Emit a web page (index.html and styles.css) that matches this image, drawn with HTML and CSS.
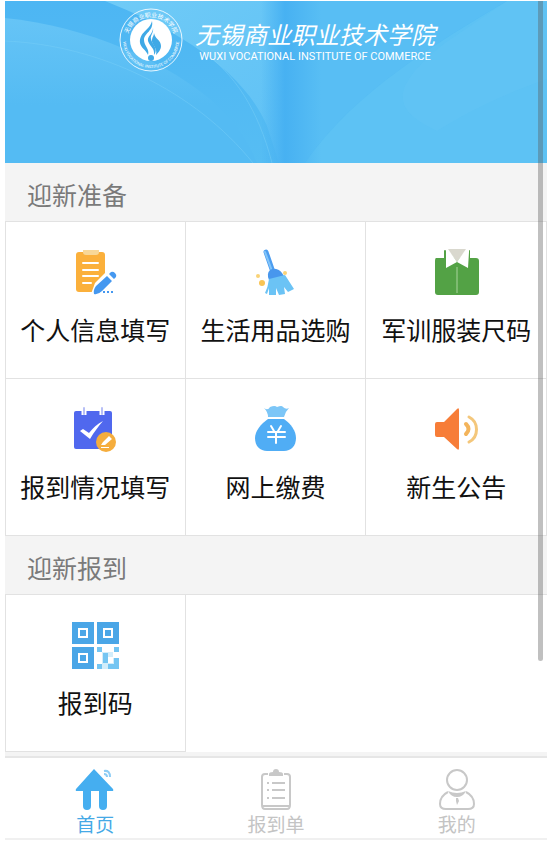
FILE: index.html
```html
<!DOCTYPE html>
<html lang="zh-CN">
<head>
  <meta charset="utf-8">
  <meta name="viewport" content="width=device-width, initial-scale=1">
  <title>迎新系统</title>
  <link rel="stylesheet" href="styles.css">
</head>
<body>

<div class="app">
  <header class="banner">
    <svg class="banner-bg" viewBox="0 0 542 162" preserveAspectRatio="none" aria-hidden="true">
      <defs>
        <linearGradient id="base" x1="0" y1="0" x2="0" y2="1">
          <stop offset="0" stop-color="#4db6f3"/>
          <stop offset="1" stop-color="#56bdf3"/>
        </linearGradient>
        <linearGradient id="fold" x1="0" y1="0" x2="1" y2="0">
          <stop offset="0" stop-color="#47b1f2" stop-opacity="0"/>
          <stop offset=".4" stop-color="#47b1f2"/>
          <stop offset="1" stop-color="#47b1f2" stop-opacity="0"/>
        </linearGradient>
        <linearGradient id="page" x1="0" y1="0" x2="1" y2="1">
          <stop offset="0" stop-color="#70cbf7"/>
          <stop offset="1" stop-color="#5fc1f5"/>
        </linearGradient>
        <linearGradient id="sweep" x1="0" y1="0" x2="0" y2="1">
          <stop offset="0" stop-color="#66c4f6"/>
          <stop offset=".6" stop-color="#54bbf3"/>
        </linearGradient>
      </defs>
      <path fill="url(#base)" d="M0 0h542v162H0z"/>
      <path fill="url(#sweep)" d="M0 17C80 25 165 60 215 107c18 18 30 37 37 55H0z"/>
      <path fill="url(#page)" d="M100 0c70 28 138 68 162 125l12 37h6V0z"/>
      <path fill="#58bef4" d="M280 0h222C430 43 350 90 300 162h-20z"/>
      <path fill="#5dc2f4" d="M300 162C350 90 430 43 502 0h40v162z"/>
      <path fill="#68c7f6" d="M502 0h40v78c-40 14-75 30-110 52C390 110 380 90 440 42z" opacity=".3"/>
      <path fill="url(#fold)" d="M256 0h60v162h-60z"/>
      <path fill="none" stroke="#75cdf8" opacity=".5" d="M195 48c35 25 58 60 72 114M0 40c95 4 190 50 248 122"/>
    </svg>
    <div class="brand">
      <svg class="brand-logo" viewBox="0 0 64 64" role="img" aria-label="校徽">
        <defs>
          <path id="arcTop" d="M9 40A24 24 0 1 1 55 40"/>
          <path id="arcBottom" d="M4 32A28 28 0 0 0 60 32"/>
        </defs>
        <circle cx="32" cy="32" r="31" fill="none" stroke="#e6f6ff" stroke-width="1"/>
        <circle cx="32" cy="32" r="21" fill="#fff"/>
        <text class="logo-cn"><textPath href="#arcTop" startOffset="50%" text-anchor="middle">无锡商业职业技术学院</textPath></text>
        <text class="logo-en"><textPath href="#arcBottom" startOffset="50%" text-anchor="middle">WUXI VOCATIONAL INSTITUTE OF COMMERCE</textPath></text>
        <path fill="#3fa9e6" d="M33 13c-2 9-13 11-12 22 1 5 6 7 8 12 2-6-4-9-4-15 0-7 10-9 8-19z"/>
        <path fill="#3fa9e6" d="M34 20c0 6-6 8-5 13 2 6 7 7 6 14 5-6-2-11-3-16-1-4 3-6 2-11z"/>
        <path fill="#3fa9e6" d="M35 25c1 6 7 7 7 13 0 4-3 7-5 9 2-7-5-11-4-15 0-3 2-4 2-7z"/>
        <circle cx="32" cy="50" r="3" fill="#3fa9e6"/>
      </svg>
      <div class="brand-text">
        <h1 class="brand-cn">无锡商业职业技术学院</h1>
        <p class="brand-en">WUXI VOCATIONAL INSTITUTE OF COMMERCE</p>
      </div>
    </div>
  </header>

  <main>
    <section>
      <h2 class="section-title">迎新准备</h2>
      <div class="grid">
        <a class="cell" href="#info">
          <svg class="icon" viewBox="0 0 48 48" aria-hidden="true">
            <rect x="5" y="4" width="29" height="40" rx="3" fill="#fbb03b"/>
            <path fill="#f8d797" d="M12 2h16v2q0 3-3 3H15q-3 0-3-3z"/>
            <path stroke="#fff" stroke-width="2" stroke-linecap="round" d="M12 15h15M12 22h15M12 28h15M12 35h8"/>
            <path fill="#fff" d="M20 46l4-11 13-13 8 5-13 19z"/>
            <path fill="#4598f0" d="M23 46q-1-4 2-8l11-10 5 5-10 10q-4 4-8 3zM38 26l2-2q2-1 4 1t1 4l-2 2z"/>
            <path stroke="#4598f0" stroke-width="2" d="M32 44h2M36 44h2M40 44h2"/>
          </svg>
          <span class="label">个人信息填写</span>
        </a>
        <a class="cell" href="#goods">
          <svg class="icon" viewBox="0 0 48 48" aria-hidden="true">
            <path stroke="#4c9df0" stroke-width="5" stroke-linecap="round" d="M15 4l7 20"/>
            <path stroke="#82c5f9" stroke-width="2" stroke-linecap="round" d="M14 4l7 19"/>
            <path fill="#4897ed" d="M17 29q-1-6 4-8 6-1 10 4l2 3-15 4z"/>
            <path fill="#6bc3f5" d="M18 31l16-4 9 14-6 3-4-5 1 7-6 1-3-7v7h-7v-7l-2 6-2-1q3-6 4-14z"/>
            <circle cx="7" cy="28" r="2" fill="#f9d377"/>
            <circle cx="11" cy="35" r="3" fill="#f9c454"/>
            <circle cx="34" cy="25" r="2" fill="#f9d377"/>
          </svg>
          <span class="label">生活用品选购</span>
        </a>
        <a class="cell" href="#uniform">
          <svg class="icon" viewBox="0 0 48 48" aria-hidden="true">
            <path fill="#53a245" d="M4 10h8V3q0-1 1-1h24q1 0 1 1v7h6q3 0 3 3v31q0 3-3 3H6q-3 0-3-3V13q0-3 1-3z"/>
            <path fill="#d9d8ce" d="M15 1h20L25 14z"/>
            <path fill="#fff" d="M13 1h3l9 13-11 6V3zM37 1h-3l-9 13 11 6 1-16z"/>
            <path stroke="#a9d49c" stroke-width="1" d="M25 19v26"/>
          </svg>
          <span class="label">军训服装尺码</span>
        </a>
        <a class="cell" href="#status">
          <svg class="icon" viewBox="0 0 48 48" aria-hidden="true">
            <rect x="3" y="6" width="38" height="38" rx="2" fill="#5068ee"/>
            <path stroke="#fff" stroke-width="5" d="M13 2v8M31 2v8"/>
            <path stroke="#b7bff6" stroke-width="2" stroke-linecap="round" d="M13 3v6M31 3v6"/>
            <path fill="#fff" d="M9 26l3-2 6 4c4-5 8-9 14-12-5 6-9 11-13 18z"/>
            <circle cx="35" cy="37" r="10" fill="#f5ad3d"/>
            <path fill="#fff" d="M30 40l2-3 6-6 3 3-7 6zM30 42h8v1h-8z"/>
          </svg>
          <span class="label">报到情况填写</span>
        </a>
        <a class="cell" href="#pay">
          <svg class="icon" viewBox="0 0 48 48" aria-hidden="true">
            <path fill="#7cc6f7" d="M13 3q4 3 6-1 5-2 7 0 5-2 6 0 3 3 6 1-4 4-5 9H17q0-5-4-9z"/>
            <path fill="#50adf5" d="M17 14h16c7 5 12 12 12 19 0 8-5 13-12 13H16C9 46 4 41 4 33c0-7 6-14 13-19z"/>
            <path fill="none" stroke="#fff" stroke-width="2" stroke-linecap="round" d="M20 21l3 5M30 21l-3 5M17 27h17M17 32h17M25 27v11"/>
          </svg>
          <span class="label">网上缴费</span>
        </a>
        <a class="cell" href="#notice">
          <svg class="icon" viewBox="0 0 48 48" aria-hidden="true">
            <path fill="#f77d38" d="M5 17h7L25 4q2-2 2 1v38q0 3-2 1L12 32H5q-2 0-2-2V19q0-2 2-2z"/>
            <path fill="none" stroke="#f3b45b" stroke-width="4" stroke-linecap="round" d="M34 19q5 5 0 10"/>
            <path fill="none" stroke="#f4c77b" stroke-width="3" stroke-linecap="round" d="M37 12c10 5 10 20 0 25"/>
          </svg>
          <span class="label">新生公告</span>
        </a>
      </div>
    </section>

    <section>
      <h2 class="section-title">迎新报到</h2>
      <div class="grid">
        <a class="cell" href="#code">
          <svg class="icon" viewBox="0 0 48 48" aria-hidden="true">
            <path fill="#4aa6e7" d="M1 1h22v22H1zM26 1h22v22H26zM1 26h22v22H1z"/>
            <path fill="none" stroke="#fff" stroke-width="2" d="M8 8h8v8H8zM33 8h8v8h-8zM8 33h8v8H8z"/>
            <path fill="#d2edfa" d="M26 26h22v22H26z"/>
            <path fill="#fff" d="M31 26h12v5H31zM26 31h5v12h-5zM37 36h5v6h-5zM42 31h6v6h-6z"/>
            <path fill="#74c5f2" d="M26 26h5v5h-5zM43 26h5v5h-5zM32 32h5v10h-5zM26 43h5v5h-5zM43 37h5v11H37v-5h6z"/>
          </svg>
          <span class="label">报到码</span>
        </a>
      </div>
    </section>
  </main>

  <nav class="tabbar">
    <a class="tab active" href="#home">
      <svg class="tab-icon" viewBox="0 0 42 42" aria-hidden="true">
        <path fill="#45aef0" d="M20 1l19 20q1 2-1 2h-5v15q0 4-4 4t-4-4V23h-8v15q0 4-4 4t-4-4V23H3q-2 0-1-2z"/>
        <path fill="none" stroke="#8dcdf5" stroke-width="2" d="M30 3q6-1 6 6M30 6q3 0 3 3"/>
      </svg>
      <span>首页</span>
    </a>
    <a class="tab" href="#list">
      <svg class="tab-icon" viewBox="0 0 42 42" aria-hidden="true">
        <path fill="none" stroke="#c8c8c8" stroke-width="2" d="M13 6h-3q-3 0-3 3v28q0 4 3 4h22q3 0 3-4V9q0-3-3-3h-3M7 38h28"/>
        <path fill="#c8c8c8" d="M14 8V6q0-2 4-2 0-3 3-3t3 3q4 0 4 2v2z"/>
        <path stroke="#c8c8c8" stroke-width="2" d="M12 15h2M12 22h2M12 30h2M17 15h13M17 22h13M17 30h13"/>
      </svg>
      <span>报到单</span>
    </a>
    <a class="tab" href="#mine">
      <svg class="tab-icon" viewBox="0 0 42 42" aria-hidden="true">
        <circle cx="21" cy="12" r="10" fill="none" stroke="#c8c8c8" stroke-width="2"/>
        <path fill="none" stroke="#c8c8c8" stroke-width="2" d="M12 24c-6 3-8 8-8 12q0 5 6 5h22q6 0 6-5c0-4-2-9-8-12"/>
        <path fill="#c8c8c8" d="M12 23q9 4 18 0-3 6-9 6t-9-6zM20 30h2l1 3-2 4-1-4z"/>
      </svg>
      <span>我的</span>
    </a>
  </nav>

  <div class="scroll-thumb"></div>
</div>

</body>
</html>
```
FILE: styles.css
```css
* {
  box-sizing: border-box;
}

body {
  margin: 0;
  padding: 1px 2px 0 5px;
  background: #fff;
  color: #111;
  font-family: "Noto Sans CJK SC", sans-serif;
}

h1,
h2,
p {
  margin: 0;
  font-weight: normal;
}

a {
  color: inherit;
  text-decoration: none;
}

.app {
  position: relative;
  background: #f4f4f4;
}

/* banner */
.banner {
  position: relative;
  height: 162px;
  padding-top: 7px;
}

.banner-bg {
  position: absolute;
  inset: 0;
  width: 100%;
  height: 100%;
}

.brand {
  position: relative;
  display: flex;
  justify-content: center;
  gap: 12px;
  padding-left: 2px;
  color: #fff;
}

.brand-logo {
  width: 64px;
  height: 64px;
  overflow: visible;
}

.logo-cn {
  font-size: 6px;
  fill: #fff;
}

.logo-en {
  font-family: Roboto, sans-serif;
  font-size: 4px;
  fill: #fff;
}

.brand-text {
  padding-top: 10px;
  text-align: center;
}

.brand-cn {
  font-size: 24px;
  line-height: 32px;
  font-style: italic;
}

.brand-en {
  font-family: Roboto, sans-serif;
  font-size: 11px;
  line-height: 14px;
}

/* sections */
.section-title {
  padding: 13px 22px 9px;
  font-size: 25px;
  line-height: 36px;
  color: #7a7a7a;
}

.grid {
  display: grid;
  grid-template-columns: repeat(3, 1fr);
  background: #fff;
  border-top: 1px solid #e2e2e2;
}

.cell {
  display: flex;
  flex-direction: column;
  align-items: center;
  gap: 15px;
  height: 157px;
  padding-top: 26px;
  border-right: 1px solid #e2e2e2;
  border-bottom: 1px solid #e2e2e2;
}

.cell:nth-child(3n + 1) {
  border-left: 1px solid #e2e2e2;
}

.icon {
  width: 48px;
  height: 48px;
  fill: none;
}

.label {
  font-size: 25px;
  line-height: 36px;
}

/* bottom tabs */
.tabbar {
  display: flex;
  margin-top: 4px;
  background: #fff;
  border-top: 2px solid #e6e6e6;
  border-bottom: 2px solid #f0f0f0;
}

.tab {
  flex: 1;
  display: flex;
  flex-direction: column;
  align-items: center;
  padding-top: 10px;
  font-size: 19px;
  line-height: 28px;
  color: #c4c4c4;
}

.tab.active {
  color: #45a9e6;
}

.tab-icon {
  width: 42px;
  height: 42px;
}

.scroll-thumb {
  position: absolute;
  top: 0;
  right: 4px;
  width: 5px;
  height: 78vh;
  border-radius: 0 0 3px 3px;
  background: rgba(90, 90, 90, .38);
}
```
